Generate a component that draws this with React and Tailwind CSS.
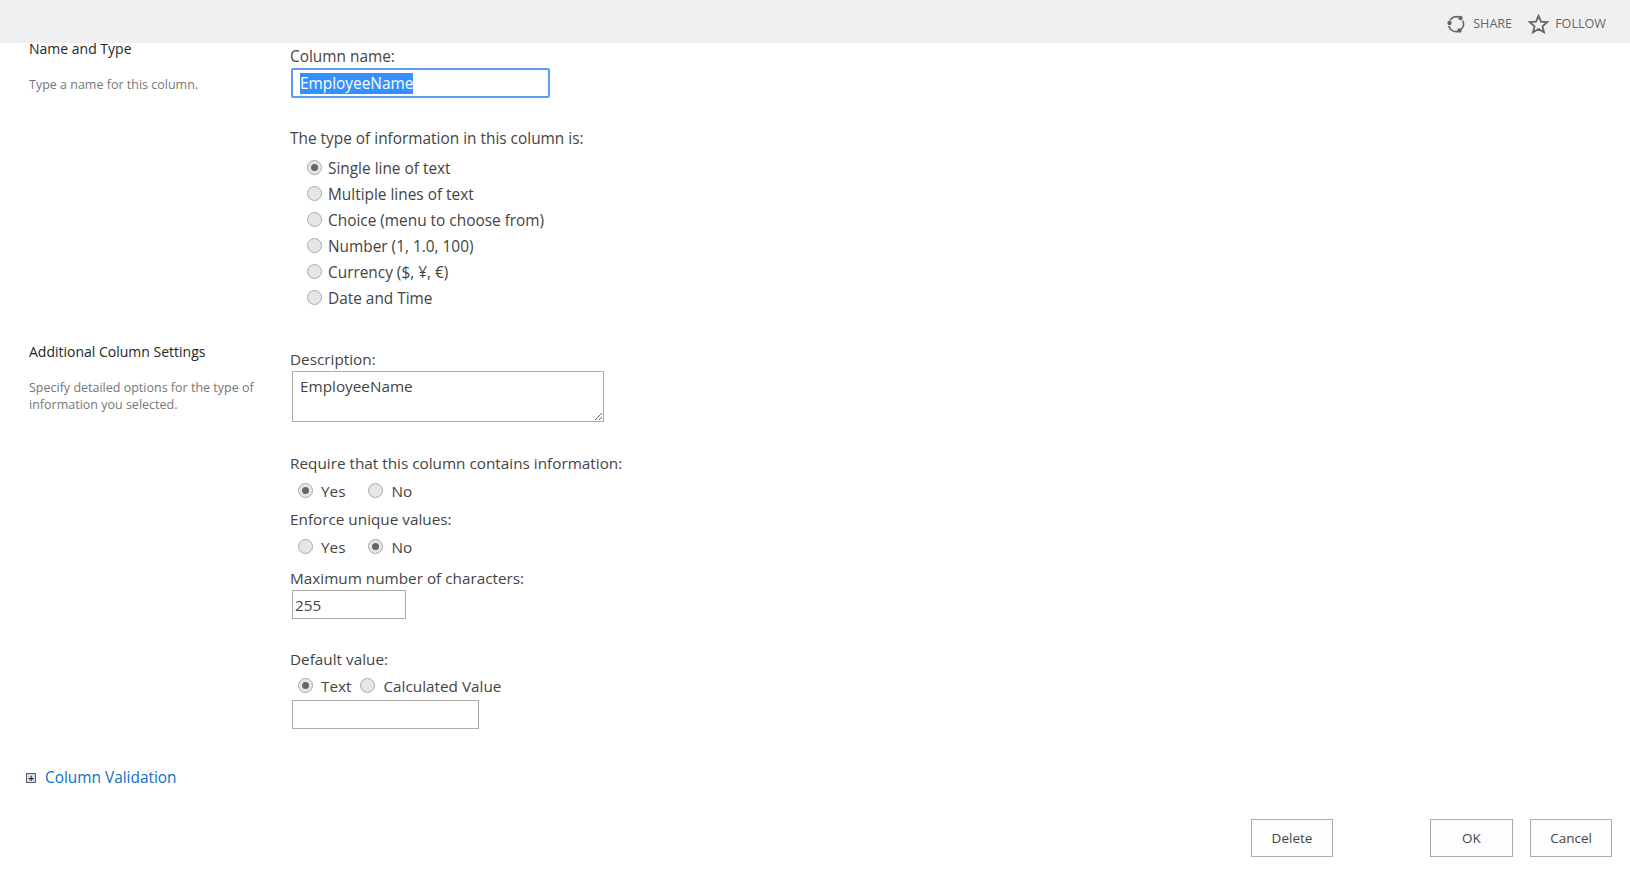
import React from "react";

const font = { fontFamily: '"Open Sans", "Liberation Sans", sans-serif' };

function Radio({ checked, label, className = "", labelClass = "ml-[6px]" }) {
  return (
    <div className={`flex items-center ${className}`}>
      <span className="mb-[2px] flex h-[15px] w-[15px] shrink-0 items-center justify-center rounded-full border border-[#ababab] bg-[#e6e6e6]">
        {checked && <span className="h-[7px] w-[7px] rounded-full bg-[#666666]" />}
      </span>
      <span className={`pt-[1px] ${labelClass}`}>{label}</span>
    </div>
  );
}

function Label({ children, className = "" }) {
  return <div className={`h-[22px] leading-[23px] ${className}`}>{children}</div>;
}

function Share() {
  return (
    <svg width="20" height="20" viewBox="0 0 20 20" fill="none" stroke="#666" strokeWidth="1.6">
      <path d="M4 6.5A7 7 0 0 1 13 3.2" />
      <path d="M16.6 6.5A7.5 7.5 0 0 1 15 15.5" />
      <path d="M12 17.4A7.5 7.5 0 0 1 2.8 12" />
      <circle cx="3.5" cy="9" r="2.2" fill="#666" stroke="none" />
      <circle cx="14.5" cy="4" r="2.2" fill="#666" stroke="none" />
      <circle cx="13.5" cy="16.5" r="2.2" fill="#666" stroke="none" />
    </svg>
  );
}

function Star() {
  return (
    <svg width="21" height="20" viewBox="0 0 21 20" fill="none" stroke="#666" strokeWidth="1.8" strokeLinejoin="miter">
      <path d="M10.5 1.8l2.5 5.8 6.2.5-4.7 4.1 1.5 6.1-5.5-3.3L5 18.3l1.5-6.1-4.7-4.1 6.2-.5z" />
    </svg>
  );
}

export default function App() {
  return (
    <div className="min-h-[875px] bg-white text-[15.3px] text-[#444444]" style={font}>
      <header className="flex h-[43px] items-center justify-end bg-[#f0f0f0] pt-[5px] pr-[24px] text-[12.6px] text-[#666666]">
        <span className="-ml-[1px]"><Share /></span>
        <span className="ml-[7px]">SHARE</span>
        <span className="ml-[16px]"><Star /></span>
        <span className="ml-[6px]">FOLLOW</span>
      </header>

      <section className="flex">
        <div className="w-[290px] shrink-0 pl-[29px] pr-[20px]">
          <div className="-mt-[5px] text-[14px] leading-[22px] text-[#262626]">Name and Type</div>
          <div className="mt-[16px] text-[12.5px] leading-[17px] text-[#777777]">Type a name for this column.</div>
        </div>
        <div className="text-[15.4px]">
          <Label className="mt-[2px]">Column name:</Label>
          <div className="ml-[1px] mt-[1px] flex h-[30px] w-[259px] items-center rounded-[2px] border-2 border-[#5b9cf5] pl-[7px]">
            <span className="bg-[#3390ff] leading-[21px] text-white">EmployeeName</span>
          </div>
          <Label className="mt-[29px]">The type of information in this column is:</Label>
          <div className="mt-[6px] pl-[17px]">
            <Radio checked label="Single line of text" className="h-[26px]" />
            <Radio label="Multiple lines of text" className="h-[26px]" />
            <Radio label="Choice (menu to choose from)" className="h-[26px]" />
            <Radio label="Number (1, 1.0, 100)" className="h-[26px]" />
            <Radio label="Currency ($, ¥, €)" className="h-[26px]" />
            <Radio label="Date and Time" className="h-[26px]" />
          </div>
        </div>
      </section>

      <section className="mt-[37px] flex">
        <div className="w-[290px] shrink-0 pl-[29px] pr-[20px]">
          <div className="-mt-[7px] text-[14px] leading-[22px] text-[#262626]">Additional Column Settings</div>
          <div className="mt-[16px] text-[12.5px] leading-[17px] text-[#777777]">Specify detailed options for the type of information you selected.</div>
        </div>
        <div>
          <Label>Description:</Label>
          <textarea
            readOnly
            defaultValue="EmployeeName"
            className="ml-[2px] mt-[1px] block h-[51px] w-[312px] border border-[#ababab] px-[7px] pt-[3px] leading-[22px] outline-none"
          />
          <Label className="mt-[30px]">Require that this column contains information:</Label>
          <div className="mt-[5px] flex h-[24px] pl-[8px]">
            <Radio checked label="Yes" labelClass="ml-[8px]" />
            <Radio label="No" labelClass="ml-[8px]" className="ml-[23px]" />
          </div>
          <Label className="mt-[5px]">Enforce unique values:</Label>
          <div className="mt-[5px] flex h-[24px] pl-[8px]">
            <Radio label="Yes" labelClass="ml-[8px]" />
            <Radio checked label="No" labelClass="ml-[8px]" className="ml-[23px]" />
          </div>
          <Label className="mt-[8px]">Maximum number of characters:</Label>
          <input
            readOnly
            defaultValue="255"
            className="ml-[2px] mt-[1px] block h-[29px] w-[114px] border border-[#ababab] px-[2px] pt-[1px] outline-none"
          />
          <Label className="mt-[29px]">Default value:</Label>
          <div className="mt-[4px] flex h-[24px] pl-[8px]">
            <Radio checked label="Text" labelClass="ml-[8px]" />
            <Radio label="Calculated Value" labelClass="ml-[8px]" className="ml-[9px]" />
          </div>
          <input readOnly className="ml-[2px] mt-[2px] block h-[29px] w-[187px] border border-[#ababab] outline-none" />
        </div>
      </section>

      <div className="mt-[37px] flex h-[24px] items-center pl-[26px]">
        <span className="-mt-[1px] flex h-[10px] w-[10px] items-center justify-center border border-[#4d5c78] bg-[#d5dde9] text-[10px] leading-none font-bold text-[#1f2b45]">+</span>
        <a className="ml-[9px] text-[15.4px] text-[#0f6fc6]">Column Validation</a>
      </div>

      <footer className="mt-[29px] flex pl-[1251px] text-[13.5px]">
        <button className="h-[38px] w-[82px] border border-[#ababab] bg-[#fdfdfd]">Delete</button>
        <button className="ml-[97px] h-[38px] w-[83px] border border-[#ababab] bg-[#fdfdfd]">OK</button>
        <button className="ml-[17px] h-[38px] w-[82px] border border-[#ababab] bg-[#fdfdfd]">Cancel</button>
      </footer>
    </div>
  );
}
